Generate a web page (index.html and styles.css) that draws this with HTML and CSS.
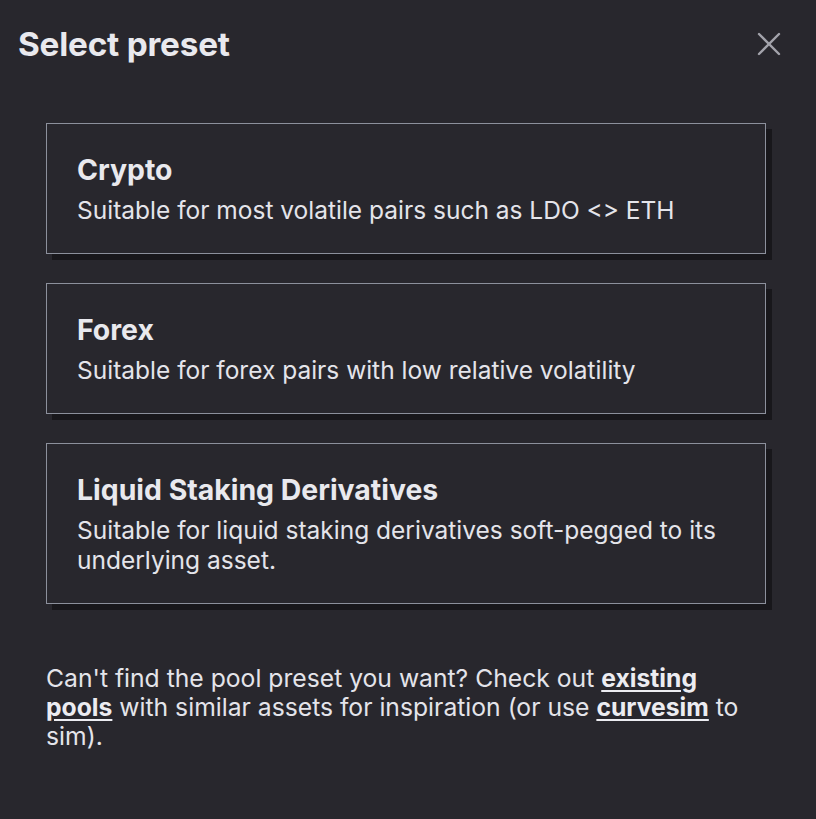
FILE: index.html
```html
<!DOCTYPE html>
<html>
<head>
<meta charset="utf-8">
<link rel="stylesheet" href="styles.css">
</head>
<body>
<div class="modal">
  <div class="header">
    <h1 class="title">Select preset</h1>
    <button class="close" aria-label="Close">
      <svg width="26" height="26" viewBox="0 0 26 26"><path d="M3 3L23 23M23 3L3 23" stroke="#a3a3ab" stroke-width="2.4" stroke-linecap="round"/></svg>
    </button>
  </div>
  <div class="presets">
    <div class="card">
      <div class="card-title">Crypto</div>
      <div class="card-desc">Suitable for most volatile pairs such as LDO &lt;&gt; ETH</div>
    </div>
    <div class="card">
      <div class="card-title">Forex</div>
      <div class="card-desc">Suitable for forex pairs with low relative volatility</div>
    </div>
    <div class="card">
      <div class="card-title">Liquid Staking Derivatives</div>
      <div class="card-desc">Suitable for liquid staking derivatives soft-pegged to its underlying asset.</div>
    </div>
  </div>
  <p class="footer">Can't find the pool preset you want? Check out <a href="#">existing pools</a> with similar assets for inspiration (or use <a href="#">curvesim</a> to sim).</p>
</div>
</body>
</html>
```
FILE: styles.css
```css
html, body {
  margin: 0;
  padding: 0;
  background: #28272d;
}
body {
  font-family: Inter, "Noto Sans", sans-serif;
  color: #e9e9ee;
  width: 816px;
  height: 819px;
  overflow: hidden;
}
.header {
  display: flex;
  justify-content: space-between;
  align-items: center;
  padding: 24px 34px 0 18px;
  height: 40px;
}
.title {
  margin: 0;
  font-size: 33.3px;
  font-weight: 700;
  color: #e9e9ee;
  letter-spacing: -0.2px;
}
.close {
  background: none;
  border: 0;
  padding: 0;
  width: 26px;
  height: 26px;
  display: flex;
  cursor: pointer;
}
.presets {
  display: flex;
  flex-direction: column;
  gap: 29px;
  padding: 59px 50px 0 46px;
}
.card {
  border: 1px solid #8c909c;
  box-shadow: 6px 6px 0 #18171b;
  padding: 29px 30px 28px 30px;
  background: #28272d;
}
.card-title {
  font-size: 28.4px;
  font-weight: 700;
  line-height: 34px;
  color: #e9e9ee;
}
.card-desc {
  font-size: 24.5px;
  line-height: 30px;
  color: #e4e4ea;
  margin-top: 8px;
}
.footer {
  margin: 60px 62px 0 46px;
  font-size: 24.7px;
  line-height: 29px;
  color: #e4e4ea;
}
.footer a {
  color: #ececf1;
  font-weight: 700;
  text-decoration: underline;
  text-underline-offset: 3px;
}
```
